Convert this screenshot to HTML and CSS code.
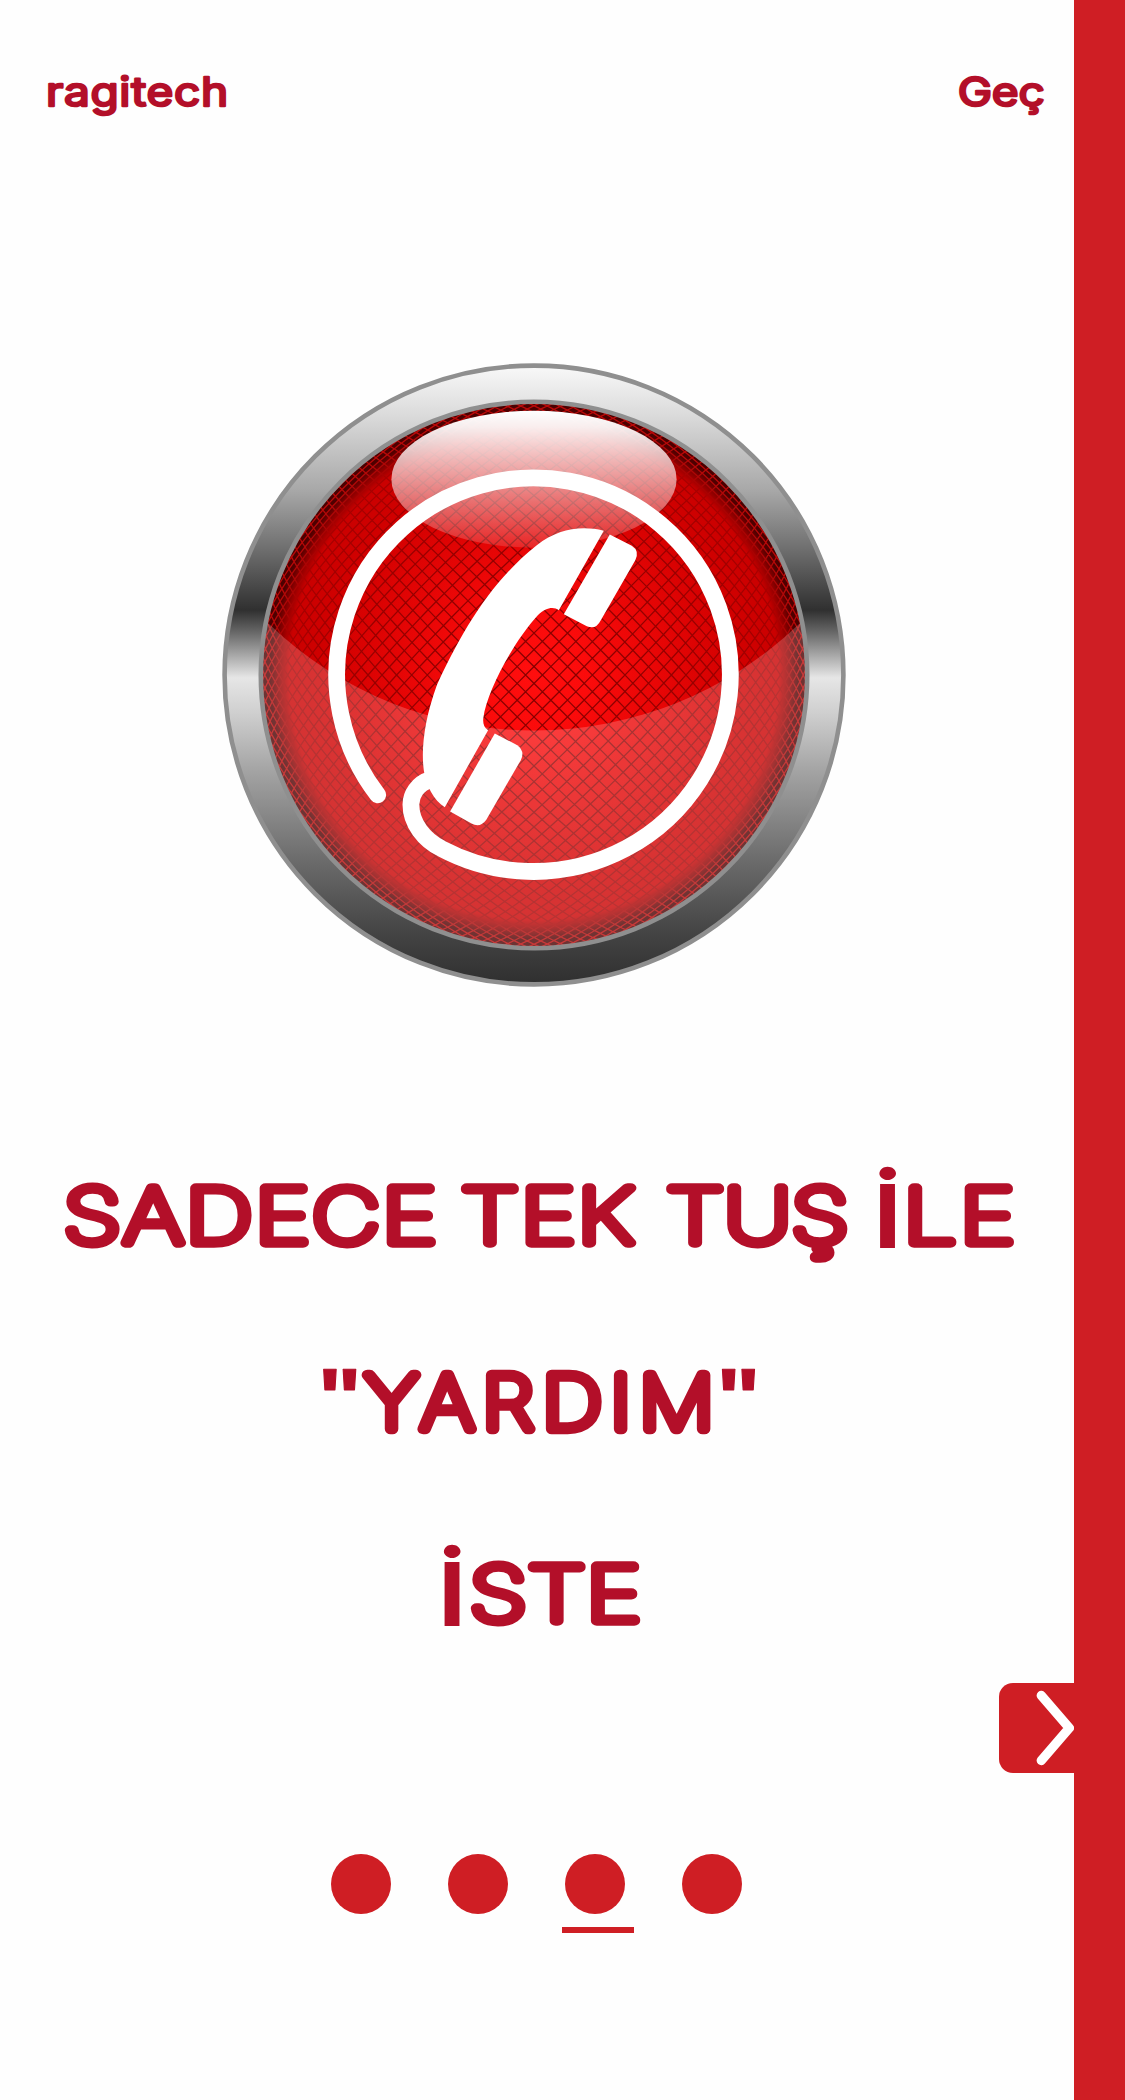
FILE: index.html
```html
<!DOCTYPE html>
<html lang="tr">
<head>
<meta charset="utf-8">
<title>ragitech</title>
<link rel="stylesheet" href="styles.css">
</head>
<body>
<main class="page">
  <header class="top">
    <svg class="label" width="200" height="60" viewBox="0 0 200 60">
      <text transform="translate(0 42.4) scale(1.15 1)" x="3.4" y="0" letter-spacing=".6">ragitech</text>
    </svg>
    <svg class="label" width="100" height="60" viewBox="0 0 100 60">
      <text transform="translate(0 42.4) scale(1.15 1)" x="3.2" y="0" letter-spacing="-.1">Geç</text>
    </svg>
  </header>

  <svg class="button" width="624" height="624" viewBox="222.2 362.8 624 624">
    <defs>
      <linearGradient id="metal" gradientUnits="userSpaceOnUse" x1="0" y1="367" x2="0" y2="982">
        <stop offset="0" stop-color="#f8f8f8"/>
        <stop offset=".08" stop-color="#dadada"/>
        <stop offset=".2" stop-color="#a8a8a8"/>
        <stop offset=".3" stop-color="#6c6c6c"/>
        <stop offset=".395" stop-color="#303030"/>
        <stop offset=".43" stop-color="#666"/>
        <stop offset=".505" stop-color="#e6e6e6"/>
        <stop offset=".56" stop-color="#d0d0d0"/>
        <stop offset=".66" stop-color="#a2a2a2"/>
        <stop offset=".8" stop-color="#6c6c6c"/>
        <stop offset=".92" stop-color="#444"/>
        <stop offset="1" stop-color="#303030"/>
      </linearGradient>
      <radialGradient id="red" gradientUnits="userSpaceOnUse" cx="534.2" cy="674.8" r="272">
        <stop offset="0" stop-color="#ff0e0e"/>
        <stop offset=".2" stop-color="#fb0b0b"/>
        <stop offset=".75" stop-color="#d20000"/>
        <stop offset=".9" stop-color="#ca0000"/>
        <stop offset=".94" stop-color="#8c0000"/>
        <stop offset=".97" stop-color="#500000"/>
        <stop offset="1" stop-color="#480000"/>
      </radialGradient>
      <radialGradient id="wire" gradientUnits="userSpaceOnUse" cx="534.2" cy="674.8" r="272">
        <stop offset="0" stop-color="#860000"/>
        <stop offset=".7" stop-color="#9c0000"/>
        <stop offset=".91" stop-color="#a80000"/>
        <stop offset=".96" stop-color="#b00808"/>
        <stop offset="1" stop-color="#c00808"/>
      </radialGradient>
      <linearGradient id="shine" x1="0" y1="0" x2="0" y2="1">
        <stop offset="0" stop-color="#fff"/>
        <stop offset=".12" stop-color="#fff" stop-opacity=".93"/>
        <stop offset="1" stop-color="#fff" stop-opacity=".13"/>
      </linearGradient>
      <clipPath id="disc"><circle cx="534.2" cy="674.8" r="272"/></clipPath>
    </defs>
    <circle cx="534.2" cy="674.8" r="309.4" fill="url(#metal)" stroke="#8f8f8f" stroke-width="4.6"/>
    <circle cx="534.2" cy="674.8" r="273" fill="url(#red)"/>
    <g clip-path="url(#disc)">
      <path id="mesh" fill="none" stroke="url(#wire)" stroke-width="1.3"/>
      <path fill="#fff" fill-opacity=".2" d="M240 603 L269.5 624 A383 383 0 0 0 799 624 L830 603 V960 H240Z"/>
    </g>
    <ellipse cx="534.2" cy="479" rx="142.6" ry="68.5" fill="url(#shine)"/>
    <circle cx="534.2" cy="674.8" r="273.2" fill="none" stroke="#8f8f8f" stroke-width="4.6"/>
    <path fill="none" stroke="#fff" stroke-width="16.8" stroke-linecap="round" d="M377.3 794.3 A196.8 196.8 0 1 1 441 848 C424 839.5 410.5 823 410.5 804 C410.5 794 417 783 430 779" transform="translate(.6 .4)"/>
    <g fill="#fff">
      <path d="M604 530.5 C580 525 558 529 537 545 C490 582 460 635 437 685 C425 718 421 748 424 770 C426 785 434 800 445 807 L488.3 730 C484 727 483 723 483.5 718 C487 690 515 640 538 615 C546 607 554 606 559 610Z"/>
      <path d="M610 534.3 L632 545.5 Q640 550.5 635.5 560 L601 620 Q596 630 587 626 L564 614Z"/>
      <path d="M495 733.3 L517.5 745 Q525.5 751 521 760 L486.5 819.5 Q480.5 828 471.7 823.3 L450.3 811.3Z"/>
    </g>
  </svg>

  <svg class="headline" width="1074" height="500" viewBox="0 1150 1074 500">
    <text transform="translate(0 1243) scale(1.25 1)"><tspan x="50.8" letter-spacing="1.9">SADECE</tspan> <tspan x="368.8" letter-spacing="1.6">TEK</tspan> <tspan x="533" letter-spacing="0">TUŞ</tspan> <tspan class="plain" x="697" y="5">İ</tspan><tspan x="722.8" y="0" letter-spacing="3">LE</tspan></text>
    <text class="narrow" transform="translate(0 1429) scale(1.13 1)"><tspan class="quote" x="281" y="-2">"</tspan><tspan x="322.8" y="0" letter-spacing="7.4">YARDI<tspan letter-spacing="0">M</tspan></tspan><tspan class="quote" x="633.8" y="-2">"</tspan></text>
    <text transform="translate(0 1621) scale(1.25 1)"><tspan class="plain" x="348.6" y="5">İ</tspan><tspan x="375.6" y="0" letter-spacing=".6">STE</tspan></text>
  </svg>

  <div class="next">
    <svg width="75" height="90" viewBox="999 1683 75 90"><path d="M1041.3 1695.5 L1069.3 1728 L1041.3 1760.5"/></svg>
  </div>

  <nav class="dots">
    <span class="dot"></span>
    <span class="dot"></span>
    <span class="dot current"></span>
    <span class="dot"></span>
  </nav>
</main>
<aside class="edge"></aside>
<script src="mesh.js"></script>
</body>
</html>
```
FILE: styles.css
```css
body {
  margin: 0;
  display: flex;
  height: 2100px;
  background: #fefefe;
}

svg {
  display: block;
}

text {
  font-family: Inter, "Liberation Sans", sans-serif;
  font-weight: 100;
  fill: #b30f29;
  stroke: #b30f29;
  stroke-linejoin: round;
}

.page {
  width: 1074px;
  display: flex;
  flex-direction: column;
  align-items: center;
}

.edge {
  width: 51px;
  background: #cf1e24;
}

.top {
  align-self: stretch;
  display: flex;
  justify-content: space-between;
  padding: 64px 20px 0 42px;
}

.label text {
  font-size: 40px;
  font-weight: 400;
  stroke-width: 2.4px;
}

.button {
  margin: 238.8px 0 0 -5.6px;
}

.headline {
  margin-top: 163.2px;
}

.headline text {
  font-size: 75px;
  stroke-width: 9.5px;
}

.headline .narrow {
  font-size: 74px;
  stroke-width: 10.3px;
}

.plain {
  font-family: Lato, sans-serif;
  font-weight: 700;
  font-size: 88px;
  stroke-width: 0;
}

.quote {
  font-family: "Liberation Sans", sans-serif;
  font-weight: 700;
  font-size: 83px;
  stroke-width: 1px;
}

.next {
  align-self: flex-end;
  margin-top: 33px;
  border-radius: 14px 0 0 14px;
  background: #cf1e24;
}

.next path {
  fill: none;
  stroke: #fff;
  stroke-width: 9.4px;
  stroke-linecap: round;
  stroke-linejoin: round;
}

.dots {
  display: flex;
  gap: 57px;
  margin-top: 81px;
  padding-right: .6px;
}

.dot {
  position: relative;
  width: 60px;
  height: 60px;
  border-radius: 50%;
  background: #cf1e24;
}

.current::after {
  content: "";
  position: absolute;
  left: -3px;
  top: 73.5px;
  width: 72px;
  height: 6px;
  background: #cf1e24;
}
```
FILE: mesh.js
```js
// Projects a diagonal grid onto a sphere so the wires bunch up at the rim.
const cx = 534.2, cy = 674.8, radius = 290, pitch = 11.9, limit = 356;

function project(x, y) {
  const d = Math.hypot(x, y);
  const k = d ? radius * Math.sin(d / radius) / d : 1;
  return (cx + x * k).toFixed(1) + " " + (cy + y * k).toFixed(1);
}

let d = "";
for (let u = -29.5 * pitch; u < limit; u += pitch) {
  const reach = Math.sqrt(Math.max(0, limit * limit - u * u));
  for (const side of [1, -1]) {
    const points = [];
    for (let i = 0; i <= 40; i++) {
      const v = -reach + (2 * reach * i) / 40;
      points.push(project((u + v) * Math.SQRT1_2, side * (u - v) * Math.SQRT1_2));
    }
    d += "M" + points.join("L");
  }
}
document.getElementById("mesh").setAttribute("d", d);
```
